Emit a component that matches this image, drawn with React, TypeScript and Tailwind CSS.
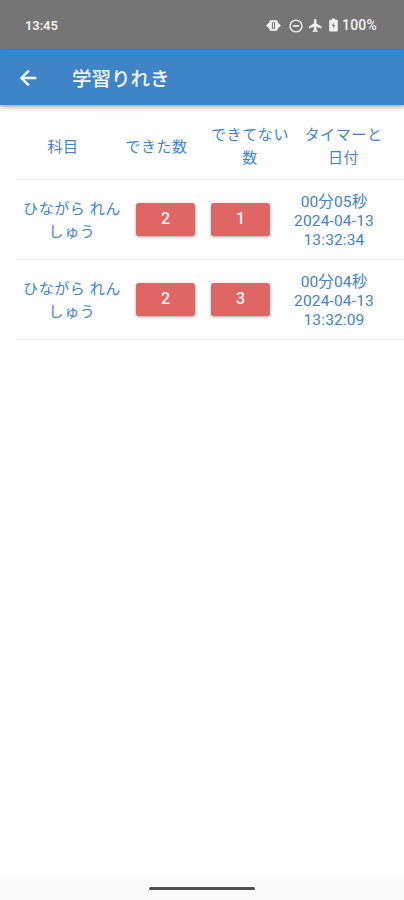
const headers = [
  { lines: ['科目'], width: 'w-[94px]' },
  { lines: ['できた数'], width: 'w-[93px]' },
  { lines: ['できてない', '数'], width: 'w-[94px]' },
  { lines: ['タイマーと', '日付'], width: 'w-[93px]' },
];

const records = [
  { done: 2, missed: 1, timer: '00分05秒', date: '2024-04-13', time: '13:32:34' },
  { done: 2, missed: 3, timer: '00分04秒', date: '2024-04-13', time: '13:32:09' },
];

function StatusBar() {
  return (
    <div className="h-[50px] bg-[#757575] flex items-center justify-between pl-[25px] pr-[27px] text-[#f2f2f2]">
      <span className="text-[13px] font-semibold tracking-[-0.1px] pt-px">13:45</span>
      <div className="flex items-center pt-px">
        <svg className="w-[15px] h-[11px] mr-[8px]" viewBox="0 0 15 11" fill="currentColor">
          <path d="M0 5.500 4 1.800V9.200ZM15 5.500 11 1.800V9.200Z" />
          <path fillRule="evenodd" d="M4.500 0.300h6q1 0 1 1v8.400q0 1-1 1h-6q-1 0-1-1V1.300q0-1 1-1zM5.900 2.300v6.400h3.200V2.300z" />
          <path d="M7 3h1v5H7z" />
        </svg>
        <svg className="w-[14px] h-[14px] mr-[6px]" viewBox="0 0 14 14" fill="none" stroke="currentColor" strokeWidth="1.4">
          <circle cx="7" cy="7" r="5.900" />
          <path d="M3.800 7h6.400" strokeWidth="1.700" />
        </svg>
        <svg className="w-[13px] h-[13px] mr-[7px]" viewBox="2 2 20 20" fill="currentColor" stroke="currentColor" strokeWidth="0.8">
          <path d="M21 16v-2l-8-5V3.500c0-.83-.67-1.500-1.500-1.500S10 2.670 10 3.500V9l-8 5v2l8-2.500V19l-2 1.500V22l3.500-1 3.500 1v-1.500L13 19v-5.500l8 2.500z" />
        </svg>
        <svg className="w-[9px] h-[14px] mr-[4px] mb-px" viewBox="0 0 9 14">
          <path d="M3 0.500h3v1.300h1.800q1 0 1 1v9.700q0 1-1 1H1.200q-1 0-1-1V2.800q0-1 1-1H3z" fill="currentColor" />
          <path d="M4.900 4.300 2.900 7.800h1.400v2.900L6.200 7H4.900z" fill="#757575" />
        </svg>
        <span className="text-[14px] font-medium tracking-[0.2px]">100%</span>
      </div>
    </div>
  );
}

function AppBar() {
  return (
    <div className="relative h-[55px] bg-[#3d85c6] flex items-center pl-[18px] text-[#f4f8fc] shadow-[0_2px_4px_rgba(0,0,0,0.35)]">
      <svg className="w-5 h-5" viewBox="2 2 20 20" fill="currentColor" stroke="currentColor" strokeWidth="0.5">
        <path d="M20 11H7.830l5.590-5.590L12 4l-8 8 8 8 1.410-1.410L7.830 13H20v-2z" />
      </svg>
      <h1 className="ml-[34px] pt-[5px] text-[19.500px] leading-7 font-medium">学習りれき</h1>
    </div>
  );
}

function CountButton({ value }: { value: number }) {
  return (
    <button className="w-[59px] h-[33px] rounded-[3px] bg-[#e06666] text-[#fdf3f3] text-base font-medium pb-px shadow-[0_1px_3px_rgba(0,0,0,0.35)]">
      {value}
    </button>
  );
}

export default function App() {
  return (
    <div className="h-[900px] w-[404px] flex flex-col overflow-hidden bg-[#fefefe] font-[Roboto,'Noto_Sans_CJK_JP',sans-serif]">
      <StatusBar />
      <AppBar />
      <main className="flex-1 pl-4 text-[#4483c8] text-center">
        <div className="h-[75px] pt-[10px] flex items-center border-b border-[#e9e9e9] text-[15px] leading-[23px] tracking-[0.600px]">
          {headers.map((header) => (
            <div key={header.lines[0]} className={header.width}>
              {header.lines.map((line) => (
                <p key={line}>{line}</p>
              ))}
            </div>
          ))}
        </div>
        {records.map((record) => (
          <div key={record.time} className="h-20 flex items-center border-b border-[#e9e9e9]">
            <div className="w-[112px] pt-[2px] text-[15px] leading-[23px] tracking-[0.600px]">
              <p>ひながら れん</p>
              <p>しゅう</p>
            </div>
            <div className="flex gap-4 ml-2">
              <CountButton value={record.done} />
              <CountButton value={record.missed} />
            </div>
            <div className="w-[128px] pt-[4px] text-[15.500px] leading-[19px] tracking-[0.150px]">
              <p>{record.timer}</p>
              <p>{record.date}</p>
              <p>{record.time}</p>
            </div>
          </div>
        ))}
      </main>
      <div className="h-[22px] bg-[#fafafa] flex items-center justify-center">
        <div className="w-[106px] h-[3px] mb-px rounded-full bg-[#505050]" />
      </div>
    </div>
  );
}
